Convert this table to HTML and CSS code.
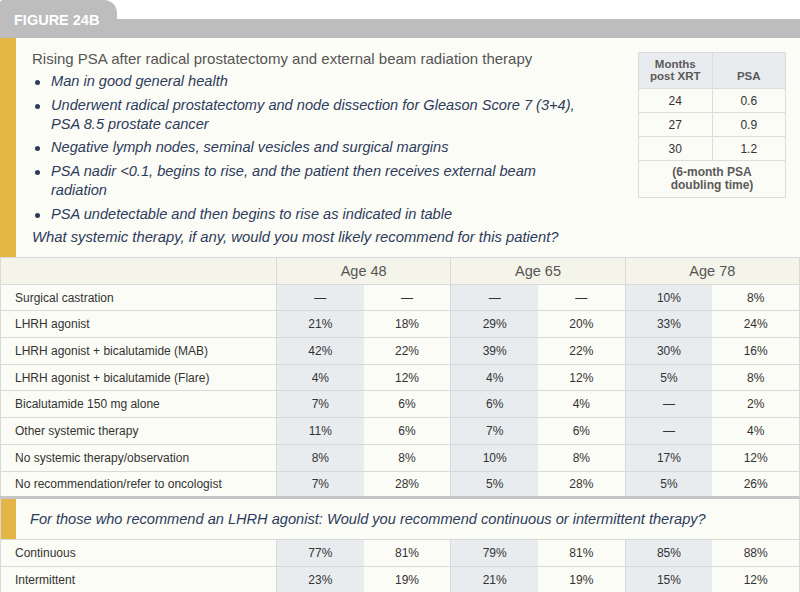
FILE: index.html
```html
<!DOCTYPE html>
<html>
<head>
<meta charset="utf-8">
<link rel="stylesheet" href="styles.css">
</head>
<body>
<div class="page">
  <div class="tabbar">
    <div class="tab">FIGURE 24B</div>
    <div class="tabrest"></div>
  </div>
  <section class="case">
    <div class="case-text">
      <h1 class="title">Rising PSA after radical prostatectomy and external beam radiation therapy</h1>
      <ul class="bullets">
        <li>Man in good general health</li>
        <li>Underwent radical prostatectomy and node dissection for Gleason Score 7 (3+4), PSA 8.5 prostate cancer</li>
        <li>Negative lymph nodes, seminal vesicles and surgical margins</li>
        <li>PSA nadir &lt;0.1, begins to rise, and the patient then receives external beam radiation</li>
        <li>PSA undetectable and then begins to rise as indicated in table</li>
      </ul>
      <p class="question">What systemic therapy, if any, would you most likely recommend for this patient?</p>
    </div>
    <table class="psa">
      <tr class="psa-head"><th>Months<br>post XRT</th><th>PSA</th></tr>
      <tr><td>24</td><td>0.6</td></tr>
      <tr><td>27</td><td>0.9</td></tr>
      <tr><td>30</td><td>1.2</td></tr>
      <tr class="psa-foot"><td colspan="2">(6-month PSA<br>doubling time)</td></tr>
    </table>
  </section>
  <table class="results">
    <colgroup>
      <col class="c-label"><col class="c-num"><col class="c-num"><col class="c-num"><col class="c-num"><col class="c-num"><col class="c-num">
    </colgroup>
    <tr class="head">
      <th></th><th colspan="2">Age 48</th><th colspan="2">Age 65</th><th colspan="2">Age 78</th>
    </tr>
    <tr><td>Surgical castration</td><td class="s">—</td><td class="e">—</td><td class="s">—</td><td class="e">—</td><td class="s">10%</td><td>8%</td></tr>
    <tr><td>LHRH agonist</td><td class="s">21%</td><td class="e">18%</td><td class="s">29%</td><td class="e">20%</td><td class="s">33%</td><td>24%</td></tr>
    <tr><td>LHRH agonist + bicalutamide (MAB)</td><td class="s">42%</td><td class="e">22%</td><td class="s">39%</td><td class="e">22%</td><td class="s">30%</td><td>16%</td></tr>
    <tr><td>LHRH agonist + bicalutamide (Flare)</td><td class="s">4%</td><td class="e">12%</td><td class="s">4%</td><td class="e">12%</td><td class="s">5%</td><td>8%</td></tr>
    <tr><td>Bicalutamide 150 mg alone</td><td class="s">7%</td><td class="e">6%</td><td class="s">6%</td><td class="e">4%</td><td class="s">—</td><td>2%</td></tr>
    <tr><td>Other systemic therapy</td><td class="s">11%</td><td class="e">6%</td><td class="s">7%</td><td class="e">6%</td><td class="s">—</td><td>4%</td></tr>
    <tr><td>No systemic therapy/observation</td><td class="s">8%</td><td class="e">8%</td><td class="s">10%</td><td class="e">8%</td><td class="s">17%</td><td>12%</td></tr>
    <tr class="last"><td>No recommendation/refer to oncologist</td><td class="s">7%</td><td class="e">28%</td><td class="s">5%</td><td class="e">28%</td><td class="s">5%</td><td>26%</td></tr>
    <tr class="q"><td colspan="7"><div class="qbox">For those who recommend an LHRH agonist: Would you recommend continuous or intermittent therapy?</div></td></tr>
    <tr><td>Continuous</td><td class="s">77%</td><td class="e">81%</td><td class="s">79%</td><td class="e">81%</td><td class="s">85%</td><td>88%</td></tr>
    <tr><td>Intermittent</td><td class="s">23%</td><td class="e">19%</td><td class="s">21%</td><td class="e">19%</td><td class="s">15%</td><td>12%</td></tr>
  </table>
</div>
</body>
</html>
```

FILE: styles.css
```css
* { box-sizing: border-box; }
html, body { margin: 0; padding: 0; background: #ffffff; }
body { font-family: "Liberation Sans", Arial, sans-serif; }
.page { width: 800px; height: 592px; overflow: hidden; background: #fcfcf6; }

.tabbar { display: flex; height: 38px; background: #ffffff; }
.tab {
  width: 117px; height: 38px; background: #bdbdbd; color: #ffffff;
  font-weight: bold; font-size: 14.5px; letter-spacing: 0;
  padding: 12px 0 0 14px;
  border-radius: 3px 13px 0 0;
}
.tabrest { flex: 1; align-self: flex-end; height: 19px; background: #bdbdbd; }

.case {
  display: flex; justify-content: space-between; align-items: flex-start;
  height: 219px; border-left: 16px solid #e4b645; background: #fcfcf6;
  padding: 11px 14px 0 16px;
}
.title { margin: 0; font-size: 15px; font-weight: normal; color: #555555; line-height: 19px; }
.bullets { list-style: none; margin: 4px 0 0 0; padding: 0; }
.bullets li {
  position: relative; padding-left: 19px; margin-bottom: 4.7px;
  font-style: italic; font-size: 14.6px; line-height: 19px; color: #2d3b5c;
}
.bullets li::before {
  content: ""; position: absolute; left: 3px; top: 8px; width: 5px; height: 5px;
  border-radius: 50%; background: #2d3b5c;
}
.bullets li:nth-child(2), .bullets li:nth-child(4) { width: 545px; }
.question { margin: 0; font-style: italic; font-size: 14.8px; line-height: 19px; color: #2d3b5c; }

.psa { border-collapse: collapse; margin-top: 3px; width: 148px; background: #fcfcf6; }
.psa th, .psa td { border: 1.5px solid #dcdcdc; text-align: center; padding: 0; }
.psa td { font-size: 12px; color: #333333; height: 24px; }
.psa-head th {
  background: #e8ecef; color: #5a5a5a; font-size: 11.5px; line-height: 12px;
  height: 36px; vertical-align: bottom; padding-bottom: 6px; width: 50%;
}
.psa-head th:first-child { vertical-align: top; padding-top: 5px; padding-bottom: 0; }
.psa-foot td { font-weight: bold; color: #5a5a5a; font-size: 12px; line-height: 13px; height: 37px; }

.results { border-collapse: collapse; width: 800px; table-layout: fixed; background: #fcfcf6; }
.c-label { width: 276px; }
.results th, .results td {
  border-top: 1px solid #d9d9d9; border-bottom: 1px solid #d9d9d9; padding: 0;
  height: 26.7px; font-size: 12px; color: #333333; text-align: center; font-weight: normal;
}
.results td:first-child { text-align: left; padding-left: 14px; border-right: 1px solid #d9d9d9; border-left: 1px solid #d9d9d9; }
.results td:last-child { border-right: 1px solid #d9d9d9; }
.results td.s { background: #e8ecef; }
.results td.e { border-right: 1px solid #d9d9d9; }
.results .head th { background: #f4f4ea; color: #555555; font-size: 14.5px; border-right: 1px solid #d9d9d9; }
.results .head th:first-child { border-left: 1px solid #d9d9d9; }
.results tr.last td { border-bottom: 3px solid #c6c6c6; }
.results tr.q td { padding: 0; height: 41px; border-left: 1px solid #d9d9d9; border-right: 1px solid #d9d9d9; }
.qbox {
  height: 40px; border-left: 15px solid #e4b645; padding-left: 14px;
  font-style: italic; font-size: 14.6px; color: #2d3b5c; line-height: 40px; text-align: left;
}
```
